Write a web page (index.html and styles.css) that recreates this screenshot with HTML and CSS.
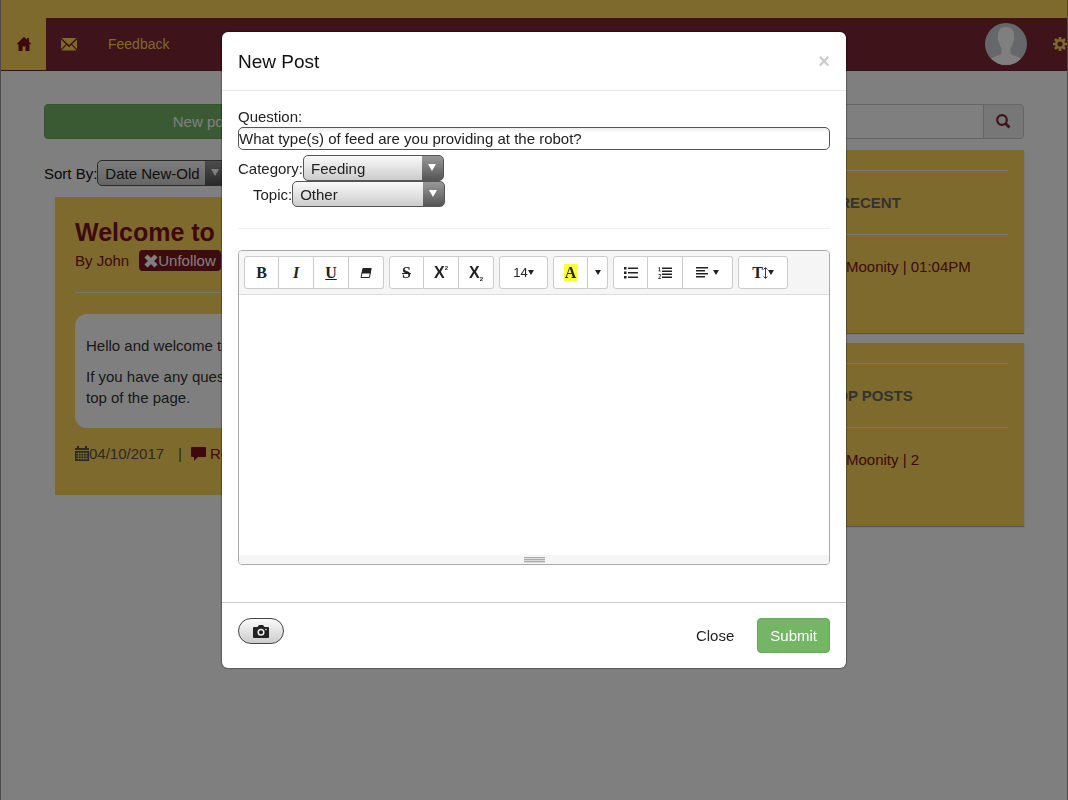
FILE: index.html
```html
<!DOCTYPE html>
<html lang="en">
<head>
<meta charset="UTF-8">
<meta name="viewport" content="width=device-width, initial-scale=1.0">
<title>New Post</title>
<link rel="stylesheet" href="styles.css">
</head>
<body>

<div class="top-strip"></div>

<nav class="navbar">
<a href="#" class="nav-home" aria-label="Home"><svg width="16" height="16" viewBox="0 0 16 16"><path d="M8 .8.5 8.3h2V15h4v-4.6h3V15h4V8.3h2L13 5.7V2h-2v1.8z"/></svg></a>
<a href="#" class="nav-mail" aria-label="Messages"><svg width="16" height="13" viewBox="0 0 16 13"><path d="M.5 0h15L8 7zM0 1.5 4.8 6.3 0 11zM16 1.5 11.2 6.3 16 11zM5.6 7 8 9.200 10.400 7 15.600 12.500H.4z"/></svg></a>
<a href="#" class="nav-link">Feedback</a>
<a href="#" class="avatar" aria-label="Profile"><svg width="42" height="42" viewBox="0 0 42 42"><defs><clipPath id="round"><circle cx="21" cy="21" r="21"/></clipPath></defs><g clip-path="url(#round)"><path fill="#cbcfd4" d="M0 0h42v42H0z"/><path fill="#fff" d="M21 4c-6 0-8.500 4-8 9.500-.8 0-.5 4 1 5 .5 3 1 5 2.500 6.500v5c-1 3-8 3-11 6v8h31v-8c-3-3-10-3-11-6v-5c1.500-1.500 2-3.500 2.500-6.500 1.500-1 1.800-5 1-5C29.500 8 27 4 21 4z"/></g></svg></a>
<a href="#" class="nav-gear" aria-label="Settings"><svg width="14" height="14" viewBox="0 0 14 14"><g stroke="#fcd458" stroke-width="2.600"><path d="M7 0v14M0 7h14M2 2l10 10M12 2 2 12"/></g><circle cx="7" cy="7" r="5" fill="#fcd458"/><circle cx="7" cy="7" r="2.600" fill="#7c2634"/></svg></a>
</nav>

<main class="container">

<section class="feed">
<button type="button" class="btn btn-green new-post">New post</button>
<div class="sort">
<label for="sort">Sort By:</label>
<span class="select-wrap">
<select id="sort" class="select sort-select"><option>Date New-Old</option></select>
</span>
</div>

<article class="post">
<h2>Welcome to Our Forum</h2>
<div class="byline"><a href="#">By John</a>
<button type="button" class="unfollow"><svg width="14" height="14" viewBox="0 0 14 14"><path d="M2 2l10 10M12 2 2 12" stroke="currentColor" stroke-width="4.500"/></svg>Unfollow</button>
</div>
<hr>
<div class="post-body">
<p>Hello and welcome to the forum!</p>
<p>If you have any questions, please use the link at the<br>top of the page.</p>
</div>
<div class="post-foot">
<svg width="14" height="15" viewBox="0 0 14 15"><path fill="currentColor" d="M0 2h2V0h2v2h6V0h2v2h2v2H0z"/><path fill="currentColor" d="M0 5h14v10H0z"/><path stroke="#fcd458" stroke-width=".7" d="M1 7.500h12M1 10h12M1 12.500h12M3.500 6v8M6 6v8M8.500 6v8M11 6v8"/></svg><span>04/10/2017</span>
<span class="bar">|</span>
<a href="#"><svg width="15" height="14" viewBox="0 0 15 14"><path fill="currentColor" d="M1 0h13q1 0 1 1v8q0 1-1 1H7l-4 4v-4H1q-1 0-1-1V1q0-1 1-1z"/></svg>Reply</a>
</div>
</article>
</section>

<aside class="sidebar">
<div class="search">
<input type="text" aria-label="Search">
<button type="button" aria-label="Search"><svg width="15" height="15" viewBox="0 0 15 15"><circle cx="6" cy="6" r="4.800" fill="none" stroke="#7c2634" stroke-width="2.200"/><path d="M9.500 9.500 13.500 13.500" stroke="#7c2634" stroke-width="2.800"/></svg></button>
</div>
<div class="panel">
<hr>
<h3>RECENT</h3>
<hr>
<a href="#">Moonity | 01:04PM</a>
</div>
<div class="panel">
<hr>
<h3>TOP POSTS</h3>
<hr>
<a href="#">Moonity | 2</a>
</div>
</aside>

</main>

<!-- New post modal -->
<div class="backdrop">
<form class="modal" role="dialog" aria-labelledby="modal-title">

<div class="modal-header">
<h1 id="modal-title">New Post</h1>
<button type="button" class="close-x" aria-label="Close">×</button>
</div>

<div class="modal-body">
<label for="question" class="question-label">Question:</label>
<input type="text" id="question" class="question" value="What type(s) of feed are you providing at the robot?">
<div class="field">
<label for="category">Category:</label>
<span class="select-wrap">
<select id="category" class="select category-select"><option>Feeding</option></select>
</span>
</div>
<div class="field topic">
<label for="topic">Topic:</label>
<span class="select-wrap">
<select id="topic" class="select topic-select"><option>Other</option></select>
</span>
</div>
<hr>

<div class="editor">
<div class="toolbar">
<div class="group">
<button type="button" class="serif">B</button>
<button type="button" class="serif italic">I</button>
<button type="button" class="serif underline">U</button>
<button type="button" aria-label="Clear formatting"><svg width="12" height="12" viewBox="0 0 12 12"><path fill="#222" d="M3 1h8.500L10.500 6.500H1.500z"/><path fill="none" stroke="#222" d="M3 1.500h8L9.500 10.500H1z"/></svg></button>
</div>
<div class="group">
<button type="button" class="serif strike">S</button>
<button type="button" class="script">X<sup>2</sup></button>
<button type="button" class="script">X<sub>2</sub></button>
</div>
<div class="group">
<button type="button" class="size">14<i class="caret"></i></button>
</div>
<div class="group">
<button type="button" class="serif"><span class="mark">A</span></button>
<button type="button" class="narrow" aria-label="More colors"><i class="caret"></i></button>
</div>
<div class="group">
<button type="button" aria-label="Bulleted list"><svg width="14" height="12" viewBox="0 0 14 12"><path fill="#222" d="M0 0h2.500v2.500H0zM0 4.500h2.500V7H0zM0 9h2.500v2.500H0zM4 .5h10V2H4zM4 5h10v1.500H4zM4 9.500h10V11H4z"/></svg></button>
<button type="button" aria-label="Numbered list"><svg width="14" height="12" viewBox="0 0 14 12"><path fill="#222" d="M4 .5h10V2H4zM4 3.500h10V5H4zM4 6.500h10V8H4zM4 9.500h10V11H4z"/><path fill="none" stroke="#222" stroke-width=".8" d="M.5 1 1.500.5V4M.5 4h2M.5 7.500h2V9L.5 11.500h2.500"/></svg></button>
<button type="button" class="wide" aria-label="Paragraph"><svg width="14" height="11" viewBox="0 0 14 11"><path fill="#222" d="M0 0h12v1.500H0zM0 3h9v1.500H0zM0 6h12v1.500H0zM0 9h9v1.500H0z"/></svg><i class="caret spaced"></i></button>
</div>
<div class="group">
<button type="button" class="serif wide" aria-label="Line height">T<svg width="5" height="12" viewBox="0 0 5 12"><path fill="none" stroke="#222" stroke-width=".9" d="M2.500 1v10M.5 2.500l2-2 2 2M.5 9.500l2 2 2-2"/></svg><i class="caret"></i></button>
</div>
</div>
<textarea class="editor-area" aria-label="Post text"></textarea>
<div class="resize"><span></span></div>
</div>
</div>

<div class="modal-footer">
<button type="button" class="camera" aria-label="Add photo"><svg width="16" height="13" viewBox="0 0 16 13"><path fill="#222" d="M1 2h3.500L6 0h4l1.500 2H15q1 0 1 1v9q0 1-1 1H1q-1 0-1-1V3q0-1 1-1z"/><circle cx="8" cy="7.300" r="2.800" fill="none" stroke="#eee" stroke-width="1.500"/><circle cx="13" cy="4.500" r=".8" fill="#eee"/></svg></button>
<div class="actions">
<button type="button" class="btn btn-plain">Close</button>
<button type="submit" class="btn btn-green">Submit</button>
</div>
</div>

</form>
</div>

</body>
</html>
```
FILE: styles.css
```css
*{
box-sizing:border-box;
}

body{
margin:0;
min-height:100vh;
font-family:"Liberation Sans", Arial, sans-serif;
font-size:15px;
line-height:21px;
color:#333;
background:white;
border:solid #999;
border-width:0 1px;
overflow:hidden;
}

button,input,select,textarea{
font:inherit;
color:inherit;
margin:0;
}

a{
color:#7c1218;
text-decoration:none;
}

svg{
flex:none;
}

hr{
border:0;
border-top:1px solid #eee;
margin:0;
}

/* Navbar */
.top-strip{
height:18px;
background:#fcd458;
}

.navbar{
display:flex;
align-items:center;
height:53px;
background:#7c2634;
border-bottom:1px solid #6a2030;
fill:#fcd458;
}

.nav-home{
display:flex;
align-items:center;
justify-content:center;
align-self:stretch;
width:45px;
background:#fcd458;
fill:#7c1218;
}

.nav-mail{
display:flex;
margin:0 31px 0 15px;
}

.nav-link{
font-size:14px;
color:#fcd458;
}

.avatar{
display:flex;
margin-left:auto;
}

.nav-gear{
display:flex;
margin:0 0 0 26px;
}

/* Page */
.container{
display:flex;
gap:32px;
padding:33px 43px;
}

.feed{
flex:1;
min-width:0;
}

.sidebar{
width:308px;
}

.btn{
height:35px;
padding:0 12px;
border:1px solid transparent;
border-radius:4px;
white-space:nowrap;
}

.btn-green{
background:#74b566;
border-color:#67a95a;
color:white;
}

.new-post{
display:block;
width:50%;
}

.sort{
display:flex;
align-items:center;
margin-top:21px;
color:#111;
}

/* Selects */
.select-wrap{
position:relative;
display:inline-flex;
}

.select-wrap::after{
content:"";
position:absolute;
right:8px;
top:9px;
border:solid transparent;
border-width:7px 4px 0;
border-top-color:white;
pointer-events:none;
}

.select{
appearance:none;
height:26px;
padding:0 22px 0 7px;
border:1px solid #555;
border-radius:5px;
color:#222;
background:
linear-gradient(#999,#555) right/21px 100% no-repeat,
linear-gradient(#fafafa,#ccc);
}

.sort-select{
width:130px;
}

.category-select{
width:141px;
}

.topic-select{
width:153px;
}

/* Post */
.post{
margin:11px 11px 0;
padding:20px;
background:#fcd458;
height:298px;
}

.post h2{
margin:0;
font-size:25px;
line-height:30px;
color:#7c1218;
}

.byline{
display:flex;
align-items:center;
gap:10px;
height:27px;
}

.unfollow{
display:flex;
align-items:center;
height:21px;
padding:0 5px;
border:0;
border-radius:4px;
background:#7c1620;
color:white;
}

.post hr{
margin-top:18px;
}

.post-body{
margin-top:21px;
padding:21px 11px;
border-radius:12px;
background:white;
height:114px;
}

.post-body p{
margin:0 0 10px;
}

.post-foot{
display:flex;
align-items:center;
margin-top:15px;
color:#555;
}

.post-foot .bar{
margin:0 9px 0 14px;
}

.post-foot a{
display:flex;
align-items:center;
gap:4px;
}

/* Sidebar */
.search{
display:flex;
height:35px;
margin-bottom:11px;
}

.search input{
flex:1;
min-width:0;
border:1px solid #ccc;
border-radius:4px 0 0 4px;
background:white;
}

.search button{
display:flex;
align-items:center;
justify-content:center;
width:41px;
margin-left:-1px;
border:1px solid #ccc;
border-radius:0 4px 4px 0;
background:#eee;
}

.panel{
height:183px;
margin-bottom:10px;
padding:20px 16px;
background:#fcd458;
box-shadow:0 1px 1px #aaa;
}

.panel hr{
border-color:#eee;
}

.panel h3{
margin:21px 0;
font-size:15px;
line-height:21px;
text-align:center;
color:#666;
}

.panel a{
display:block;
margin:21px 0 0 114px;
}

/* Modal */
.backdrop{
position:fixed;
inset:0;
padding:32px 16px;
background:rgba(0,0,0,0.5);
}

.modal{
max-width:624px;
margin:0 auto;
background:white;
border-radius:6px;
box-shadow:0 0 1px 1px rgba(0,0,0,0.3);
color:#222;
}

.modal-header{
display:flex;
align-items:center;
justify-content:space-between;
height:59px;
padding:0 16px;
border-bottom:1px solid #e8e8e8;
}

.modal-header h1{
margin:0;
font-size:19px;
font-weight:normal;
color:#111;
}

.close-x{
padding:0;
border:0;
background:none;
font-size:20px;
font-weight:bold;
color:#ccc;
}

.modal-body{
padding:15px 16px 37px;
}

.question-label{
display:block;
}

.question{
display:block;
width:100%;
height:23px;
margin-bottom:5px;
padding:0;
border:1px solid #555;
border-radius:5px;
background:linear-gradient(#eee,white 5px);
}

.field{
display:flex;
align-items:center;
}

.topic{
padding-left:15px;
}

.modal-body hr{
margin:21px 0;
}

/* Editor */
.editor{
border:1px solid #aaa;
border-radius:4px;
overflow:hidden;
}

.toolbar{
display:flex;
flex-wrap:wrap;
gap:5px;
padding:5px;
border-bottom:1px solid #ddd;
background:#f5f5f5;
}

.group{
display:flex;
}

.group button{
display:flex;
align-items:center;
justify-content:center;
width:35px;
height:33px;
padding:0;
border:1px solid #ccc;
background:white;
}

.group button + button{
border-left:0;
}

.group button:first-child{
border-radius:3px 0 0 3px;
}

.group button:last-child{
border-radius:0 3px 3px 0;
}

.group button:only-child{
border-radius:3px;
}

.group .serif{
font-family:"Liberation Serif", serif;
font-size:16px;
font-weight:bold;
}

.group .italic{
font-style:italic;
}

.group .underline{
text-decoration:underline;
}

.group .strike{
text-decoration:line-through;
}

.group .script{
font-size:16px;
font-weight:bold;
}

.script sup,.script sub{
font-size:6px;
line-height:6px;
}

.script sup{
margin-bottom:9px;
}

.script sub{
margin-top:12px;
}

.group .size{
width:49px;
font-size:13px;
}

.group .narrow{
width:20px;
}

.group .wide{
width:50px;
}

.mark{
padding:0 1px;
line-height:17px;
background:#ff3;
}

.caret{
border:solid transparent;
border-width:5px 3px 0;
border-top-color:#222;
}

.spaced{
margin-left:3px;
}

.editor-area{
display:block;
width:100%;
height:260px;
padding:10px;
border:0;
resize:none;
outline:0;
}

.resize{
display:flex;
justify-content:center;
height:9px;
padding-top:2px;
background:#f5f5f5;
}

.resize span{
width:21px;
height:6px;
background:repeating-linear-gradient(#aaa 0 1px,#ddd 1px 2px);
}

.modal-footer{
display:flex;
justify-content:space-between;
align-items:flex-start;
padding:15px 16px;
border-top:1px solid #ccc;
}

.camera{
display:flex;
align-items:center;
justify-content:center;
width:46px;
height:26px;
border:1px solid #444;
border-radius:13px;
background:linear-gradient(#fafafa,#ccc);
}

.actions{
display:flex;
gap:10px;
}

.btn-plain{
background:white;
}
```
